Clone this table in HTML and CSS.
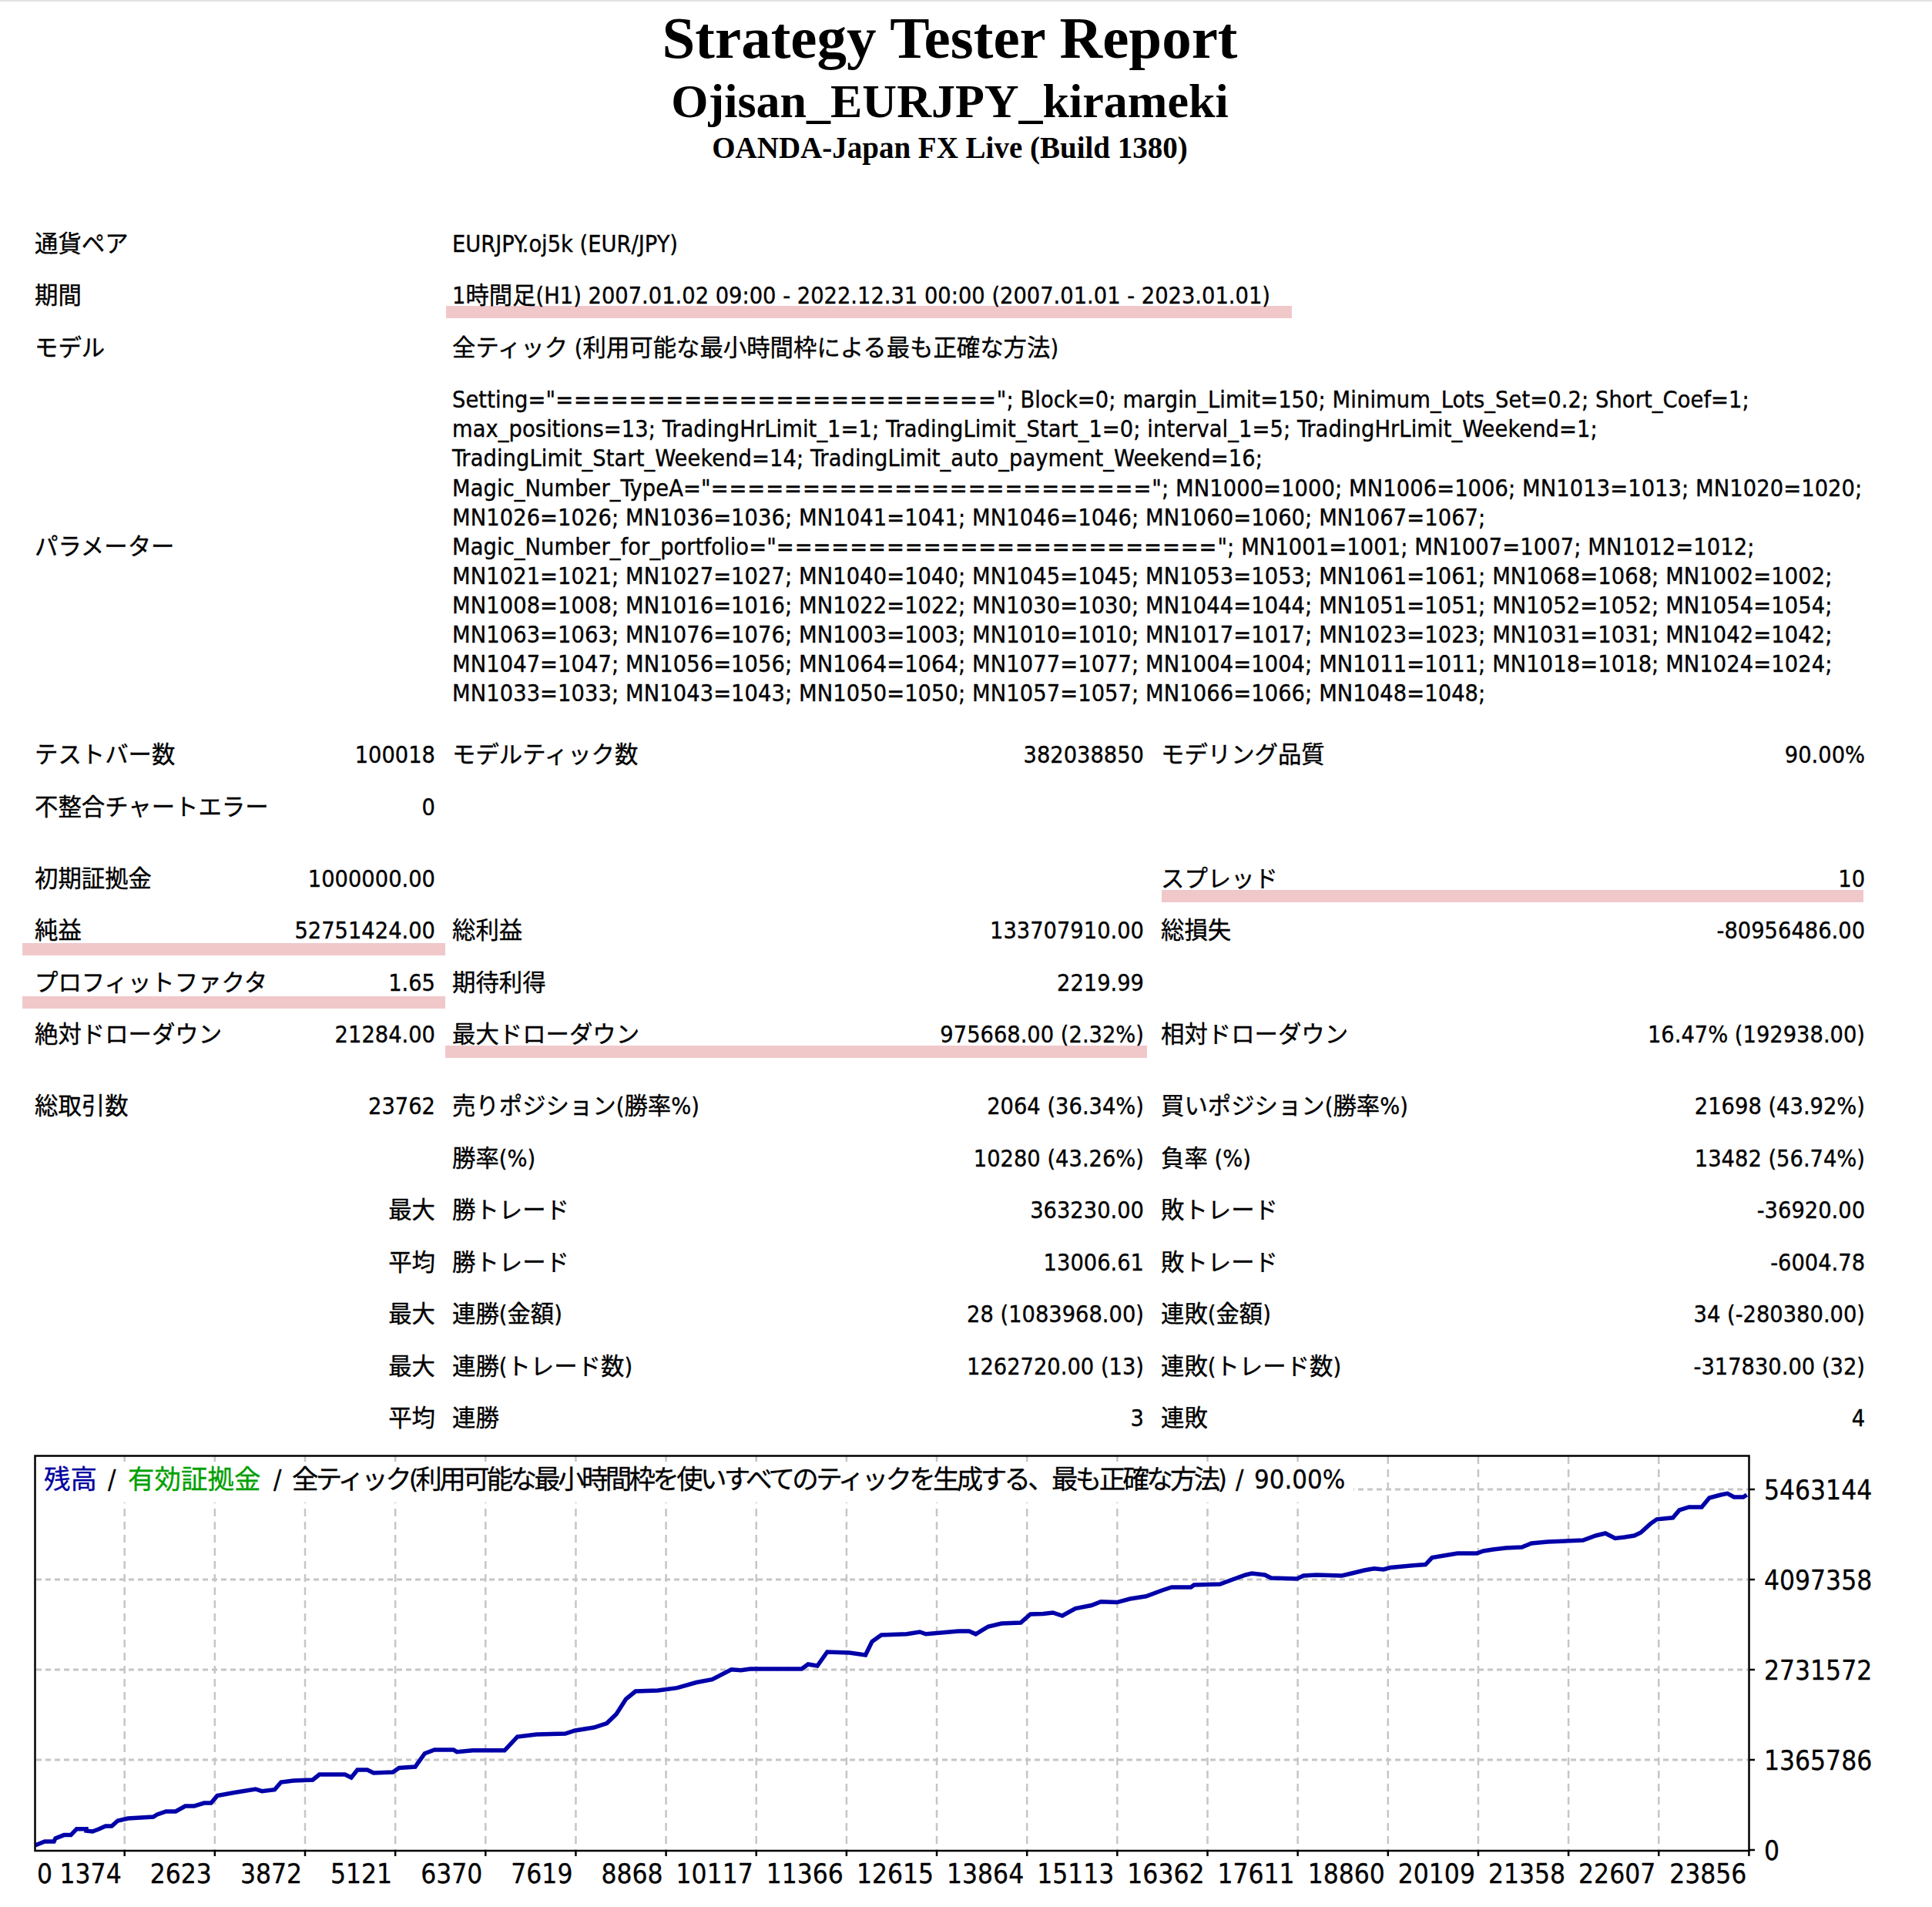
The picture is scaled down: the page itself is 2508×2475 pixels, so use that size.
FILE: index.html
```html
<!DOCTYPE html>
<html lang="ja">
<head>
<meta charset="utf-8">
<title>Strategy Tester: Ojisan_EURJPY_kirameki</title>
<link rel="stylesheet" href="styles.css">
</head>
<body>
<div class="report">
  <div class="head">
    <div class="t1">Strategy Tester Report</div>
    <div class="t2">Ojisan_EURJPY_kirameki</div>
    <div class="t3">OANDA-Japan FX Live (Build 1380)</div>
  </div>

  <table class="stats">
    <colgroup>
      <col class="w1"><col class="w2"><col class="w3"><col class="w4"><col class="w5"><col class="w6">
    </colgroup>
    <tr><td colspan="2" class="c1">通貨ペア</td><td colspan="4" class="c3">EURJPY.oj5k (EUR/JPY)</td></tr>
    <tr><td colspan="2" class="c1">期間</td><td colspan="4" class="c3 mark"><span class="hl hl-period"></span>1時間足(H1) 2007.01.02 09:00 - 2022.12.31 00:00 (2007.01.01 - 2023.01.01)</td></tr>
    <tr><td colspan="2" class="c1">モデル</td><td colspan="4" class="c3">全ティック (利用可能な最小時間枠による最も正確な方法)</td></tr>
    <tr><td colspan="2" class="c1">パラメーター</td><td colspan="4" class="c3 params">Setting="<span class="eq">========================</span>"; Block=0; margin_Limit=150; Minimum_Lots_Set=0.2; Short_Coef=1;<br>max_positions=13; TradingHrLimit_1=1; TradingLimit_Start_1=0; interval_1=5; TradingHrLimit_Weekend=1;<br>TradingLimit_Start_Weekend=14; TradingLimit_auto_payment_Weekend=16;<br>Magic_Number_TypeA="<span class="eq">========================</span>"; MN1000=1000; MN1006=1006; MN1013=1013; MN1020=1020;<br>MN1026=1026; MN1036=1036; MN1041=1041; MN1046=1046; MN1060=1060; MN1067=1067;<br>Magic_Number_for_portfolio="<span class="eq">========================</span>"; MN1001=1001; MN1007=1007; MN1012=1012;<br>MN1021=1021; MN1027=1027; MN1040=1040; MN1045=1045; MN1053=1053; MN1061=1061; MN1068=1068; MN1002=1002;<br>MN1008=1008; MN1016=1016; MN1022=1022; MN1030=1030; MN1044=1044; MN1051=1051; MN1052=1052; MN1054=1054;<br>MN1063=1063; MN1076=1076; MN1003=1003; MN1010=1010; MN1017=1017; MN1023=1023; MN1031=1031; MN1042=1042;<br>MN1047=1047; MN1056=1056; MN1064=1064; MN1077=1077; MN1004=1004; MN1011=1011; MN1018=1018; MN1024=1024;<br>MN1033=1033; MN1043=1043; MN1050=1050; MN1057=1057; MN1066=1066; MN1048=1048;</td></tr>
    <tr class="gap-s"><td colspan="6"></td></tr>
    <tr><td class="c1">テストバー数</td><td class="c2">100018</td><td class="c3">モデルティック数</td><td class="c4">382038850</td><td class="c5">モデリング品質</td><td class="c6">90.00%</td></tr>
    <tr><td class="c1">不整合チャートエラー</td><td class="c2">0</td><td class="c3"></td><td class="c4"></td><td class="c5"></td><td class="c6"></td></tr>
    <tr class="gap"><td colspan="6"></td></tr>
    <tr><td class="c1">初期証拠金</td><td class="c2">1000000.00</td><td class="c3"></td><td class="c4"></td><td class="c5 mark"><span class="hl hl-spread"></span>スプレッド</td><td class="c6">10</td></tr>
    <tr><td class="c1 mark"><span class="hl hl-net"></span>純益</td><td class="c2">52751424.00</td><td class="c3">総利益</td><td class="c4">133707910.00</td><td class="c5">総損失</td><td class="c6">-80956486.00</td></tr>
    <tr><td class="c1 mark"><span class="hl hl-pf"></span>プロフィットファクタ</td><td class="c2">1.65</td><td class="c3">期待利得</td><td class="c4">2219.99</td><td class="c5"></td><td class="c6"></td></tr>
    <tr><td class="c1">絶対ドローダウン</td><td class="c2">21284.00</td><td class="c3 mark"><span class="hl hl-dd"></span>最大ドローダウン</td><td class="c4">975668.00 (2.32%)</td><td class="c5">相対ドローダウン</td><td class="c6">16.47% (192938.00)</td></tr>
    <tr class="gap"><td colspan="6"></td></tr>
    <tr><td class="c1">総取引数</td><td class="c2">23762</td><td class="c3">売りポジション(勝率%)</td><td class="c4">2064 (36.34%)</td><td class="c5">買いポジション(勝率%)</td><td class="c6">21698 (43.92%)</td></tr>
    <tr><td class="c1"></td><td class="c2"></td><td class="c3">勝率(%)</td><td class="c4">10280 (43.26%)</td><td class="c5">負率 (%)</td><td class="c6">13482 (56.74%)</td></tr>
    <tr><td class="c1"></td><td class="c2">最大</td><td class="c3">勝トレード</td><td class="c4">363230.00</td><td class="c5">敗トレード</td><td class="c6">-36920.00</td></tr>
    <tr><td class="c1"></td><td class="c2">平均</td><td class="c3">勝トレード</td><td class="c4">13006.61</td><td class="c5">敗トレード</td><td class="c6">-6004.78</td></tr>
    <tr><td class="c1"></td><td class="c2">最大</td><td class="c3">連勝(金額)</td><td class="c4">28 (1083968.00)</td><td class="c5">連敗(金額)</td><td class="c6">34 (-280380.00)</td></tr>
    <tr><td class="c1"></td><td class="c2">最大</td><td class="c3">連勝(トレード数)</td><td class="c4">1262720.00 (13)</td><td class="c5">連敗(トレード数)</td><td class="c6">-317830.00 (32)</td></tr>
    <tr><td class="c1"></td><td class="c2">平均</td><td class="c3">連勝</td><td class="c4">3</td><td class="c5">連敗</td><td class="c6">4</td></tr>
  </table>
</div>

<svg class="chart" width="2508" height="600" viewBox="0 1875 2508 600" xmlns="http://www.w3.org/2000/svg">
  <g class="grid-v">
    <line x1="161.7" y1="1890" x2="161.7" y2="2401"/>
    <line x1="278.85" y1="1890" x2="278.85" y2="2401"/>
    <line x1="396" y1="1890" x2="396" y2="2401"/>
    <line x1="513.15" y1="1890" x2="513.15" y2="2401"/>
    <line x1="630.3" y1="1890" x2="630.3" y2="2401"/>
    <line x1="747.45" y1="1890" x2="747.45" y2="2401"/>
    <line x1="864.6" y1="1890" x2="864.6" y2="2401"/>
    <line x1="981.75" y1="1890" x2="981.75" y2="2401"/>
    <line x1="1098.9" y1="1890" x2="1098.9" y2="2401"/>
    <line x1="1216.05" y1="1890" x2="1216.05" y2="2401"/>
    <line x1="1333.2" y1="1890" x2="1333.2" y2="2401"/>
    <line x1="1450.35" y1="1890" x2="1450.35" y2="2401"/>
    <line x1="1567.5" y1="1890" x2="1567.5" y2="2401"/>
    <line x1="1684.65" y1="1890" x2="1684.65" y2="2401"/>
    <line x1="1801.8" y1="1890" x2="1801.8" y2="2401"/>
    <line x1="1918.95" y1="1890" x2="1918.95" y2="2401"/>
    <line x1="2036.1" y1="1890" x2="2036.1" y2="2401"/>
    <line x1="2153.25" y1="1890" x2="2153.25" y2="2401"/>
  </g>
  <g class="grid-h">
    <line x1="47" y1="1933" x2="2269" y2="1933"/>
    <line x1="47" y1="2050" x2="2269" y2="2050"/>
    <line x1="47" y1="2167" x2="2269" y2="2167"/>
    <line x1="47" y1="2284" x2="2269" y2="2284"/>
  </g>
  <rect class="legend-bg" x="47" y="1897" width="1710" height="53"/>
  <text class="legend lg-bal" x="57" y="1932">残高</text>
  <text class="legend" x="140" y="1932">/</text>
  <text class="legend lg-eq" x="166" y="1932">有効証拠金</text>
  <text class="legend" x="355" y="1932">/</text>
  <text class="legend long" x="379" y="1932">全ティック(利用可能な最小時間枠を使いすべてのティックを生成する、最も正確な方法)</text>
  <text class="legend" x="1604" y="1932">/</text>
  <text class="legend" x="1628" y="1932">90.00%</text>
  <polyline class="curve" points="45.6,2395 58,2390 70,2390 72,2386 83,2381.6 92,2381.6 99.5,2373.7 112,2373.7 112,2376 120,2377 128,2374 137,2370 145,2370 153,2363 166,2360 199,2358 204,2355 215.6,2351 228,2351 240.5,2344 252,2344 265,2340 274,2340 282,2330.6 302.7,2326.7 331.7,2322 340,2324.7 356.5,2322.7 364.8,2313 381,2311 406,2310 414.6,2303 447.8,2303 456,2307 464,2297 476.8,2297 485,2301 510,2300 518,2294.5 539,2293 551.4,2275.7 564,2271 588.7,2271 593,2273.7 613.6,2271.8 655,2271.8 671.6,2254 696.5,2251 733.8,2250 746.3,2246 771,2242 787.7,2236.5 800,2224.7 812.6,2205 825,2195 854,2194 879,2190.6 904,2183.5 924.5,2179.6 949.4,2166.7 961.9,2167.8 974,2166 1040.6,2166 1049,2160 1061,2162 1073.8,2144 1102.8,2145 1123.5,2148 1132,2130.6 1144,2122 1177,2120.8 1194,2118 1202,2120.8 1244,2117 1258,2117 1266.7,2120.8 1283,2111 1300,2107 1325,2106 1337.6,2095 1354,2094.5 1366.8,2093 1379,2097 1396,2087.5 1416.8,2083.5 1429,2078.8 1450,2079.6 1467,2075 1487.7,2071.8 1508.6,2064 1521,2060 1546,2060 1550,2057 1583.7,2056 1600,2050 1617,2044 1625,2042 1642,2044 1650,2048 1683.7,2049 1692,2045 1708.8,2044 1742,2045 1754.6,2042 1771,2038 1783.8,2035.7 1796,2037 1804.7,2034.5 1833.9,2031.8 1850.5,2030.6 1859,2021.6 1875.6,2018.8 1892,2016 1917,2016 1925.6,2013 1938,2011 1954.8,2009 1975.6,2008 1988,2003 2009,2001 2055,1999 2071.6,1993 2084,1990 2096.6,1996.5 2109,1995 2121.6,1993 2130,1989 2142.5,1977.6 2150.8,1971.8 2171.6,1969.8 2180,1960 2192.5,1956 2209,1956 2219,1944 2234,1940 2242.5,1938.4 2251,1943 2263,1943 2267.6,1940"/>
  <rect class="frame" x="45.5" y="1889.5" width="2225" height="512.5"/>
  <g class="ticks">
    <line x1="2271" y1="1933" x2="2278" y2="1933"/>
    <line x1="2271" y1="2050" x2="2278" y2="2050"/>
    <line x1="2271" y1="2167" x2="2278" y2="2167"/>
    <line x1="2271" y1="2284" x2="2278" y2="2284"/>
    <line x1="2271" y1="2401" x2="2278" y2="2401"/>
    <line x1="161.7" y1="2402" x2="161.7" y2="2409"/>
    <line x1="278.85" y1="2402" x2="278.85" y2="2409"/>
    <line x1="396" y1="2402" x2="396" y2="2409"/>
    <line x1="513.15" y1="2402" x2="513.15" y2="2409"/>
    <line x1="630.3" y1="2402" x2="630.3" y2="2409"/>
    <line x1="747.45" y1="2402" x2="747.45" y2="2409"/>
    <line x1="864.6" y1="2402" x2="864.6" y2="2409"/>
    <line x1="981.75" y1="2402" x2="981.75" y2="2409"/>
    <line x1="1098.9" y1="2402" x2="1098.9" y2="2409"/>
    <line x1="1216.05" y1="2402" x2="1216.05" y2="2409"/>
    <line x1="1333.2" y1="2402" x2="1333.2" y2="2409"/>
    <line x1="1450.35" y1="2402" x2="1450.35" y2="2409"/>
    <line x1="1567.5" y1="2402" x2="1567.5" y2="2409"/>
    <line x1="1684.65" y1="2402" x2="1684.65" y2="2409"/>
    <line x1="1801.8" y1="2402" x2="1801.8" y2="2409"/>
    <line x1="1918.95" y1="2402" x2="1918.95" y2="2409"/>
    <line x1="2036.1" y1="2402" x2="2036.1" y2="2409"/>
    <line x1="2153.25" y1="2402" x2="2153.25" y2="2409"/>
    <line x1="2270.4" y1="2402" x2="2270.4" y2="2409"/>
  </g>
  <g class="ylab">
    <text x="2290" y="1946">5463144</text>
    <text x="2290" y="2063">4097358</text>
    <text x="2290" y="2180">2731572</text>
    <text x="2290" y="2297">1365786</text>
    <text x="2290" y="2414">0</text>
  </g>
  <g class="xlab">
    <text x="48" y="2444" class="start">0</text>
    <text x="157.7" y="2444">1374</text>
    <text x="274.85" y="2444">2623</text>
    <text x="392" y="2444">3872</text>
    <text x="509.15" y="2444">5121</text>
    <text x="626.3" y="2444">6370</text>
    <text x="743.45" y="2444">7619</text>
    <text x="860.6" y="2444">8868</text>
    <text x="977.75" y="2444">10117</text>
    <text x="1094.9" y="2444">11366</text>
    <text x="1212.05" y="2444">12615</text>
    <text x="1329.2" y="2444">13864</text>
    <text x="1446.35" y="2444">15113</text>
    <text x="1563.5" y="2444">16362</text>
    <text x="1680.65" y="2444">17611</text>
    <text x="1797.8" y="2444">18860</text>
    <text x="1914.95" y="2444">20109</text>
    <text x="2032.1" y="2444">21358</text>
    <text x="2149.25" y="2444">22607</text>
    <text x="2267.4" y="2444">23856</text>
  </g>
</svg>
</body>
</html>
```

FILE: styles.css
```css
html {
  margin: 0;
  padding: 0;
  background: #ffffff;
}

body {
  margin: 0;
  padding: 0;
  border-top: 2px solid #e2e2e2;
  color: #000;
  font-family: "DejaVu Sans Condensed", "Liberation Sans", "Noto Sans CJK JP", sans-serif;
  font-size: 30.4px;
}

.report {
  width: 2394px;
  margin-left: 36px;
}

.head {
  text-align: center;
  font-family: "Liberation Serif", "Times New Roman", serif;
  font-weight: bold;
  padding-top: 3.5px;
}

.t1 { font-size: 77px; line-height: 87px; }
.t2 { font-size: 62px; line-height: 77.2px; }
.t3 { font-size: 39px; line-height: 44.4px; }

.stats {
  margin-top: 68.95px;
  width: 2394px;
  table-layout: fixed;
  border-collapse: collapse;
}

.w1 { width: 344px; }
.w2 { width: 194px; }
.w3 { width: 526px; }
.w4 { width: 394px; }
.w5 { width: 496px; }
.w6 { width: 440px; }

.stats td {
  padding: 14.75px 0;
  line-height: 38px;
  white-space: nowrap;
  vertical-align: middle;
  text-align: left;
  -webkit-text-stroke: 0.35px #000;
}

.stats .c1 { padding-left: 9px; }
.stats .c2 { padding-right: 9px; text-align: right; }
.stats .c3 { padding-left: 13px; }
.stats .c4 { padding-right: 9px; text-align: right; }
.stats .c5 { padding-left: 13px; }
.stats .c6 { padding-right: 9px; text-align: right; }

.stats .params { line-height: 38.08px; letter-spacing: 0.08px; }
.params .eq { letter-spacing: 0.95px; }

.stats .gap td { padding: 0; height: 25.6px; }
.stats .gap-s td { padding: 0; height: 12.6px; }

.mark { position: relative; }

.hl {
  position: absolute;
  z-index: -1;
  height: 16px;
  background: #f1c8ca;
}

.hl-period { left: 5px;  width: 1098px; bottom: 5px; }
.hl-spread { left: 14px; width: 911px;  bottom: 3.6px; }
.hl-net    { left: -7px; width: 549px;  bottom: 2px; }
.hl-pf     { left: -7px; width: 549px;  bottom: 0.6px; }
.hl-dd     { left: 4px;  width: 911px;  bottom: 4px; }

.chart {
  display: block;
}

.grid-v line {
  stroke: #c6c6c6;
  stroke-width: 2.5;
  stroke-dasharray: 10 7;
}

.grid-h line {
  stroke: #c6c6c6;
  stroke-width: 3;
  stroke-dasharray: 7 5;
}

.legend-bg { fill: #ffffff; }

.legend {
  font-family: "DejaVu Sans Condensed", "Liberation Sans", "Noto Sans CJK JP", sans-serif;
  font-size: 34.5px;
  fill: #000;
  stroke: #000;
  stroke-width: 0.3px;
}

.legend.long { letter-spacing: -3.7px; }

.legend.lg-bal { fill: #0000a0; stroke: #0000a0; }
.legend.lg-eq { fill: #00a000; stroke: #00a000; }

.curve {
  fill: none;
  stroke: #0000a8;
  stroke-width: 5.5;
  stroke-linejoin: miter;
}

.frame {
  fill: none;
  stroke: #000;
  stroke-width: 2.5;
}

.ticks line {
  stroke: #000;
  stroke-width: 2.5;
}

.ylab text, .xlab text {
  font-family: "DejaVu Sans Condensed", "Liberation Sans", sans-serif;
  font-size: 35px;
  fill: #000;
  stroke: #000;
  stroke-width: 0.3px;
}

.xlab text { text-anchor: end; }
.xlab text.start { text-anchor: start; }
```
